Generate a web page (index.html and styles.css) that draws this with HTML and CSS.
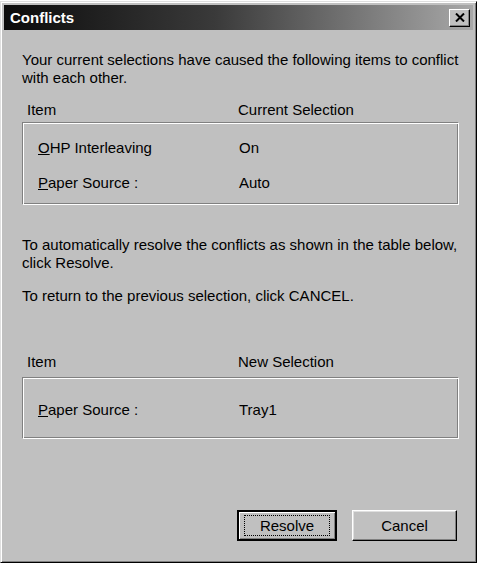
FILE: index.html
```html
<!DOCTYPE html>
<html lang="en">
<head>
    <meta charset="UTF-8">
    <title>Conflicts</title>
    <link rel="stylesheet" href="styles.css">
</head>
<body>
    <div class="dialog">
        <!-- Caption bar -->
        <div class="titlebar">
            <span class="title">Conflicts</span>
            <button class="close-btn" type="button">
                <svg width="10" height="9" viewBox="0 0 10 9">
                    <path d="M1 0.5 L9 8.5 M9 0.5 L1 8.5" stroke="#000" stroke-width="2"/>
                </svg>
            </button>
        </div>

        <div class="content">
            <p class="intro">Your current selections have caused the following items to conflict with each other.</p>

            <div class="table-head">
                <span class="col-item">Item</span>
                <span class="col-value">Current Selection</span>
            </div>
            <div class="group current">
                <div class="row">
                    <span class="col-item"><u>O</u>HP Interleaving</span>
                    <span class="col-value">On</span>
                </div>
                <div class="row">
                    <span class="col-item"><u>P</u>aper Source :</span>
                    <span class="col-value">Auto</span>
                </div>
            </div>

            <p class="note">To automatically resolve the conflicts as shown in the table below, click Resolve.</p>
            <p class="note cancel-note">To return to the previous selection, click CANCEL.</p>

            <div class="table-head new-head">
                <span class="col-item">Item</span>
                <span class="col-value">New Selection</span>
            </div>
            <div class="group proposed">
                <div class="row">
                    <span class="col-item"><u>P</u>aper Source :</span>
                    <span class="col-value">Tray1</span>
                </div>
            </div>

            <div class="buttons">
                <button class="btn default" type="button"><span class="focus">Resolve</span></button>
                <button class="btn" type="button">Cancel</button>
            </div>
        </div>
    </div>
</body>
</html>
```

FILE: styles.css
```css
body {
    margin: 0;
    background: #ffffff;
    font-family: "Liberation Sans", Arial, sans-serif;
    font-size: 15px;
    color: #000;
}

.dialog {
    width: 477px;
    height: 562px;
    margin-top: 1px;
    box-sizing: border-box;
    background: #c0c0c0;
    border: 1px solid;
    border-color: #dfdfdf #000 #000 #dfdfdf;
    box-shadow: inset 1px 1px 0 #fff, inset -1px -1px 0 #808080;
    padding: 3px;
    display: flex;
    flex-direction: column;
}

/* Caption bar with the dark-to-grey gradient */
.titlebar {
    height: 25px;
    display: flex;
    align-items: center;
    justify-content: space-between;
    padding: 0 3px 0 6px;
    background: linear-gradient(to right, #0c0c0c 0%, #3a3a3a 45%, #a8a8a8 100%);
}

.title {
    color: #fff;
    font-weight: bold;
    font-size: 15px;
}

.close-btn {
    width: 21px;
    height: 18px;
    padding: 0;
    display: flex;
    align-items: center;
    justify-content: center;
    background: #c0c0c0;
    border: 1px solid;
    border-color: #fff #000 #000 #fff;
    box-shadow: inset -1px -1px 0 #808080;
}

.content {
    flex: 1;
    display: flex;
    flex-direction: column;
    padding: 21px 14px 18px 18px;
}

p {
    margin: 0;
    line-height: 18px;
}

.intro {
    margin-bottom: 14px;
}

.table-head,
.row {
    display: flex;
    line-height: 18px;
}

.table-head {
    padding-left: 5px;
    margin-bottom: 3px;
}

.new-head {
    margin-bottom: 6px;
}

.table-head .col-item {
    width: 211px;
}

.row .col-item {
    width: 201px;
}

/* Etched group frame */
.group {
    border: 1px solid;
    border-color: #808080 #fff #fff #808080;
    box-shadow: inset 1px 1px 0 #fff, inset -1px -1px 0 #808080;
    padding: 16px 15px 12px;
    display: flex;
    flex-direction: column;
    gap: 17px;
}

.group.current {
    margin-bottom: 31px;
}

.group.proposed {
    padding: 23px 15px 19px;
}

.note {
    margin-bottom: 15px;
}

.cancel-note {
    margin-bottom: 48px;
}

.buttons {
    margin-top: auto;
    display: flex;
    justify-content: flex-end;
    gap: 15px;
    padding-right: 2px;
}

.btn {
    height: 31px;
    width: 105px;
    padding: 0;
    font-family: "Liberation Sans", Arial, sans-serif;
    font-size: 15px;
    background: #c0c0c0;
    border: 1px solid;
    border-color: #fff #000 #000 #fff;
    box-shadow: inset -1px -1px 0 #808080, inset 1px 1px 0 #dfdfdf;
}

.btn.default {
    width: 100px;
    border: 2px solid #000;
    box-shadow: inset 1px 1px 0 #fff, inset -1px -1px 0 #808080;
    display: flex;
    align-items: center;
    justify-content: center;
}

.focus {
    display: block;
    width: 84px;
    line-height: 19px;
    outline: 1px dotted #000;
}
```
